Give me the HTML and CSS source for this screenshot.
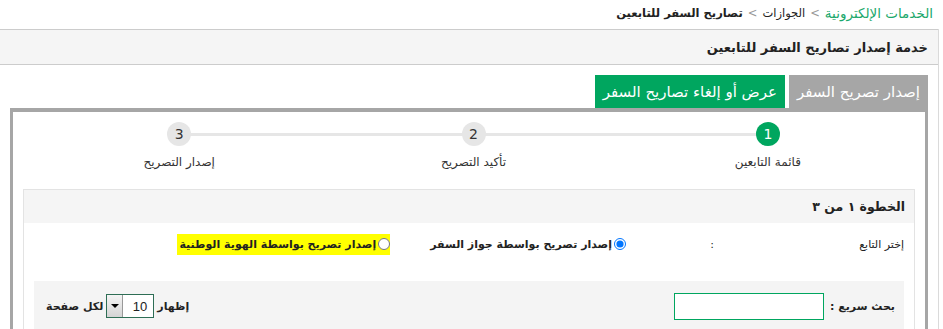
FILE: index.html
```html
<!DOCTYPE html>
<html lang="ar" dir="rtl">
<head>
  <meta charset="UTF-8" />
  <title>خدمة إصدار تصاريح السفر للتابعين</title>
  <link rel="stylesheet" href="styles.css">
</head>
<body>
  <div class="breadcrumb">
    <a class="crumb-link">الخدمات الإلكترونية</a>
    <span class="sep">&gt;</span>
    <span>الجوازات</span>
    <span class="sep">&gt;</span>
    <strong>تصاريح السفر للتابعين</strong>
  </div>

  <div class="page">
    <div class="page-title">خدمة إصدار تصاريح السفر للتابعين</div>

    <div class="tabs">
      <a class="tab tab-active">إصدار تصريح السفر</a>
      <a class="tab tab-alt">عرض أو إلغاء تصاريح السفر</a>
    </div>

    <div class="wizard">
      <ol class="steps">
        <li class="step done"><span class="num">1</span><span class="label">قائمة التابعين</span></li>
        <li class="step"><span class="num">2</span><span class="label">تأكيد التصريح</span></li>
        <li class="step"><span class="num">3</span><span class="label">إصدار التصريح</span></li>
      </ol>

      <div class="panel">
        <div class="panel-head">الخطوة ١ من ٣</div>
        <div class="panel-body">
          <div class="field-row">
            <span class="field-label">إختر التابع</span>
            <span class="colon">:</span>
            <label class="option"><input type="radio" name="by" checked> إصدار تصريح بواسطة جواز السفر</label>
            <label class="option highlight"><input type="radio" name="by"> إصدار تصريح بواسطة الهوية الوطنية</label>
          </div>

          <div class="toolbar">
            <div class="search">
              <span>بحث سريع :</span>
              <input type="text" class="search-input">
            </div>
            <div class="page-size">
              <span>إظهار</span>
              <div class="select">
                <span class="select-value">10</span>
                <span class="select-arrow"></span>
              </div>
              <span>لكل صفحة</span>
            </div>
          </div>
        </div>
      </div>
    </div>
  </div>
</body>
</html>
```

FILE: styles.css
```css
:root {
  --green: #00a65f;
  --gray-tab: #a6a6a6;
  --light-bg: #f5f5f5;
  --text: #222;
}

body {
  margin: 0;
  font-family: Tahoma, "DejaVu Sans", sans-serif;
  color: var(--text);
  background: #fff;
  direction: rtl;
}

.breadcrumb {
  height: 29px;
  padding: 0 10px 4px;
  font-size: 11.5px;
  display: flex;
  align-items: center;
  gap: 5px;
  box-sizing: border-box;
}
.crumb-link { color: #1aa86b; font-size: 13.5px; }
.sep { color: #999; }

.page {
  margin-right: 4px;
  border-right: 1px solid #dadada;
  padding-bottom: 20px;
}

.page-title {
  height: 34px;
  background: var(--light-bg);
  border-top: 1px solid #ccc;
  border-bottom: 1px solid #ccc;
  padding-right: 10px;
  font-size: 13px;
  font-weight: bold;
  display: flex;
  align-items: center;
}

.tabs {
  display: flex;
  gap: 4px;
  margin-top: 10px;
  padding-right: 10px;
}
.tab {
  height: 33px;
  padding: 0 8px;
  color: #fff;
  font-size: 15px;
  display: flex;
  align-items: center;
}
.tab-active { background: var(--gray-tab); }
.tab-alt { background: var(--green); }

.wizard {
  margin: 0 10px;
  border: 3px solid var(--gray-tab);
  border-top-width: 4px;
  padding: 10px 10px 0;
}

.steps {
  list-style: none;
  margin: 0;
  padding: 0 0 0 9px;
  display: flex;
  position: relative;
}
.steps::before {
  content: "";
  position: absolute;
  top: 11px;
  right: 16.66%;
  left: 18%;
  height: 3px;
  background: #e6e6e6;
}
.step {
  flex: 1;
  display: flex;
  flex-direction: column;
  align-items: center;
  gap: 9px;
  position: relative;
}
.num {
  width: 24px;
  height: 24px;
  border-radius: 50%;
  background: #e6e6e6;
  color: #333;
  font-size: 14px;
  display: flex;
  align-items: center;
  justify-content: center;
}
.step.done .num { background: var(--green); color: #fff; }
.label { font-size: 12px; color: #333; }

.panel {
  margin-top: 20px;
  border: 1px solid #e3e3e3;
  border-bottom: none;
}
.panel-head {
  height: 33px;
  background: var(--light-bg);
  padding-right: 9px;
  font-size: 12.5px;
  font-weight: bold;
  display: flex;
  align-items: center;
}
.panel-body { padding: 9px 10px 0; }

.field-row {
  display: flex;
  align-items: center;
  height: 24px;
  font-size: 11px;
}
.field-label { width: 190px; }
.colon { width: 88px; }
.option {
  display: flex;
  align-items: center;
  gap: 2px;
  font-weight: bold;
  margin-left: 40px;
}
.option input { margin: 0; width: 12px; height: 12px; }
.highlight { background: #ffff00; padding: 4px 0 4px 2px; }

.toolbar {
  margin-top: 25px;
  background: #f4f4f4;
  height: 60px;
  padding: 12px 9px 0 12px;
  box-sizing: border-box;
  display: flex;
  justify-content: space-between;
  align-items: flex-start;
  font-size: 11px;
  font-weight: bold;
}
.search, .page-size {
  display: flex;
  align-items: center;
  gap: 6px;
}
.search-input {
  width: 144px;
  height: 23px;
  border: 1px solid var(--green);
  margin: 0;
}
.page-size { margin-top: 1px; gap: 3px; }
.select {
  display: flex;
  width: 46px;
  height: 22px;
  border: 1px solid #2e6e55;
  background: #fff;
  font-weight: normal;
}
.select-value {
  flex: 1;
  display: flex;
  align-items: center;
  justify-content: flex-start;
  padding-right: 6px;
  font-family: "Liberation Sans", sans-serif;
  font-size: 13px;
}
.select-arrow {
  width: 15px;
  border-right: 1px solid #999;
  background: linear-gradient(#f4f4f4, #d4d4d4);
  position: relative;
}
.select-arrow::after {
  content: "";
  position: absolute;
  top: 9px;
  left: 4px;
  border-left: 4px solid transparent;
  border-right: 4px solid transparent;
  border-top: 4px solid #000;
}
```
